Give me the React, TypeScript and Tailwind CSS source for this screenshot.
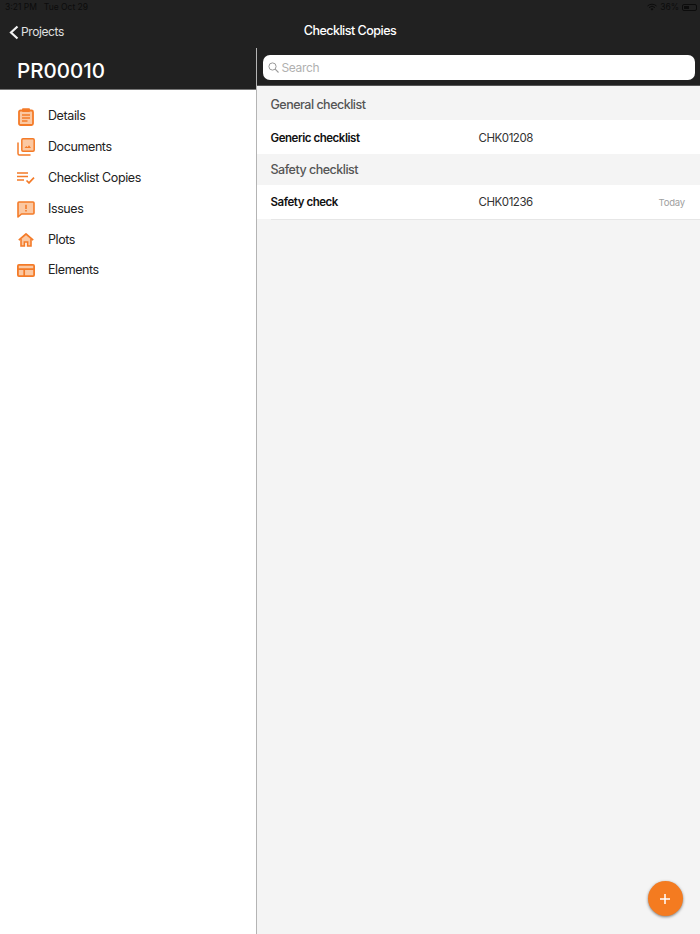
export default function App() {
  const menu: [string, React.ReactNode][] = [
    ["Details", <svg width="16" height="18" viewBox="0 0 16 18" fill="none"><rect x="1" y="2.5" width="14" height="14.5" rx="1.5" fill="#fbc8a2" stroke="#f47b28" strokeWidth="1.8" /><rect x="4" y="0.3" width="8" height="3.7" rx="1" fill="#f47b28" /><path d="M4 7h8M4 10h8M4 13h5.5" stroke="#f47b28" strokeWidth="1.3" /></svg>],
    ["Documents", <svg width="18" height="18" viewBox="0 0 18 18" fill="none"><path d="M1 5v10.5A1.5 1.5 0 0 0 2.5 17H13" stroke="#f47b28" strokeWidth="1.5" strokeLinecap="round" /><rect x="4.8" y="0.8" width="12.4" height="12.4" rx="1.2" fill="#fbc8a2" stroke="#f47b28" strokeWidth="1.5" /><path d="M7.5 10l1.8-2 1.2 1.2 1.5-2 2 2.8z" fill="#f47b28" /></svg>],
    ["Checklist Copies", <svg width="18" height="12" viewBox="0 0 18 12" fill="none"><path d="M0 1h11M0 4.5h11M0 8h7" stroke="#f47b28" strokeWidth="1.5" /><path d="M9.5 8.5l2.5 2.4 5-5.2" stroke="#f47b28" strokeWidth="1.7" /></svg>],
    ["Issues", <svg width="18" height="17" viewBox="0 0 18 17" fill="none"><path d="M2 1h14a1 1 0 0 1 1 1v10a1 1 0 0 1-1 1H4.5L1 16V2a1 1 0 0 1 1-1z" fill="#fbc8a2" stroke="#f47b28" strokeWidth="1.6" strokeLinejoin="round" /><path d="M9 3.8v4.2M9 9v1.6" stroke="#f47b28" strokeWidth="1.6" /></svg>],
    ["Plots", <svg width="16" height="14" viewBox="0 0 16 14" fill="none"><path d="M3 6v7h3.4V9h3.2v4H13V6L8 1.8z" fill="#fbc8a2" /><path d="M0.8 7.2L8 1l7.2 6.2" stroke="#f47b28" strokeWidth="1.7" strokeLinejoin="round" /><path d="M3 6v7h3.4V9h3.2v4H13V6" stroke="#f47b28" strokeWidth="1.6" /></svg>],
    ["Elements", <svg width="18" height="13" viewBox="0 0 18 13" fill="none"><rect x="0.9" y="0.9" width="16.2" height="11.2" rx="1" fill="#fbc8a2" stroke="#f47b28" strokeWidth="1.8" /><path d="M1 5.2h16M7.2 5.2v7" stroke="#f47b28" strokeWidth="1.7" /></svg>],
  ];
  return (
    <div className="w-[700px] h-[934px] flex flex-col overflow-hidden bg-white font-['Inter','Liberation_Sans',sans-serif]">
      <div className="h-[48px] bg-[#212121] flex flex-col shrink-0">
        <div className="h-[14px] flex items-center justify-between pl-[5px] pr-[3px] text-[8.5px] text-[#0c0c0c]">
          <span className="flex gap-[7px]"><span>3:21 PM</span><span>Tue Oct 29</span></span>
          <span className="flex items-center gap-[3px]">
            <svg width="10" height="8" viewBox="0 0 10 8" fill="none"><path d="M0.5 3a6.5 6.5 0 0 1 9 0M2 4.6a4.3 4.3 0 0 1 6 0" stroke="#0c0c0c" strokeWidth="1" /><path d="M3.6 6a2 2 0 0 1 2.8 0L5 7.5z" fill="#0c0c0c" /></svg>
            <span>36%</span>
            <span className="w-[15px] h-[7px] border border-[#0c0c0c] rounded-[2px] flex p-px"><span className="w-[5px] bg-[#0c0c0c]" /></span>
          </span>
        </div>
        <div className="relative flex-1 flex items-center justify-center">
          <div className="absolute left-[9px] top-[9px] flex items-center gap-[2px] text-[12px] tracking-[-0.4px] text-[#e0e0e0]">
            <svg width="10" height="15" viewBox="0 0 10 15" fill="none"><path d="M8.5 1.5L2 7.5l6.5 6" stroke="#f2f2f2" strokeWidth="2.2" /></svg>
            <span>Projects</span>
          </div>
          <span className="text-[12.5px] tracking-[-0.5px] font-medium text-white">Checklist Copies</span>
        </div>
      </div>
      <div className="flex-1 flex min-h-0">
        <div className="w-[257px] shrink-0 border-r border-[#b4b4b4] flex flex-col">
          <div className="h-[42px] bg-[#212121] border-b border-[#777777] pl-[17px] pt-[5px] flex items-center text-[20.5px] font-medium text-white">PR00010</div>
          <div className="pt-[11.3px] flex flex-col">
            {menu.map(([label, icon]) => (
              <div key={label} className="h-[30.8px] flex items-center">
                <span className="w-[18px] ml-[17px] mr-[13px] flex justify-center">{icon}</span>
                <span className="text-[12.5px] tracking-[-0.4px] text-[#222222]">{label}</span>
              </div>
            ))}
          </div>
        </div>
        <div className="flex-1 relative bg-[#f4f4f4] flex flex-col min-w-0">
          <div className="h-[38px] bg-[#212121] border-b border-[#555555] pt-[7px] px-[5.5px]">
            <div className="h-[25px] bg-white rounded-[7px] flex items-center pl-[5px] gap-[3px] text-[12px] tracking-[-0.35px] text-[#b0b0b0]">
              <svg width="11" height="11" viewBox="0 0 11 11" fill="none"><circle cx="4.5" cy="4.5" r="3.6" stroke="#9a9a9a" strokeWidth="1" /><path d="M7.2 7.2L10.5 10.5" stroke="#9a9a9a" strokeWidth="1.1" /></svg>
              <span>Search</span>
            </div>
          </div>
          <div className="h-[34px] pl-[13.5px] pt-[5px] flex items-center text-[12.5px] tracking-[-0.5px] font-medium text-[#555555]">General checklist</div>
          <div className="h-[34px] bg-white pl-[13.5px] pt-[3px] flex items-center text-[11.5px] tracking-[-0.45px] text-[#111111]">
            <span className="w-[208px] font-semibold">Generic checklist</span><span className="text-[#333333]">CHK01208</span>
          </div>
          <div className="h-[31px] pl-[13.5px] pt-[2px] flex items-center text-[12.5px] tracking-[-0.5px] font-medium text-[#555555]">Safety checklist</div>
          <div className="h-[34px] bg-white pl-[13.5px] pr-[15px] pt-[2px] flex items-center text-[11.5px] tracking-[-0.45px] text-[#111111]">
            <span className="w-[208px] font-semibold">Safety check</span><span className="text-[#333333]">CHK01236</span>
            <span className="ml-auto text-[9.5px] tracking-[-0.2px] text-[#a0a0a0]">Today</span>
          </div>
          <div className="h-px ml-[14px] bg-[#e6e6e6]" />
          <button className="absolute right-[17.5px] bottom-[18px] w-[35px] h-[35px] rounded-full bg-[#f47b20] flex items-center justify-center shadow-[0_1px_3px_rgba(0,0,0,0.5)]">
            <svg width="12" height="12" viewBox="0 0 12 12"><path d="M6 1v10M1 6h10" stroke="white" strokeWidth="1.5" /></svg>
          </button>
        </div>
      </div>
    </div>
  );
}
